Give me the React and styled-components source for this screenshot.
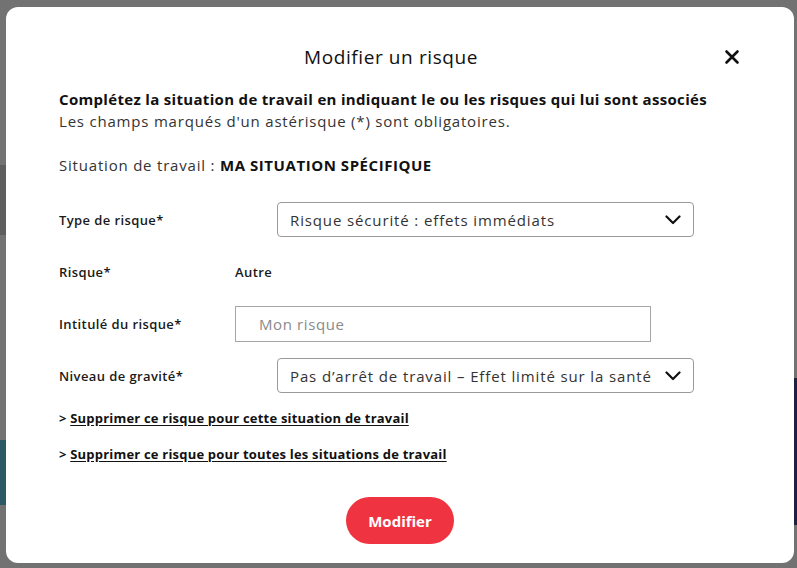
import React from "react";
import styled, { createGlobalStyle } from "styled-components";

const GlobalStyle = createGlobalStyle`
  html, body {
    margin: 0;
    padding: 0;
    height: 100%;
  }
  body {
    font-family: "Open Sans", "Liberation Sans", sans-serif;
    color: #1a1a1a;
    background: #6f6f6f;
  }
`;

const Page = styled.div`
  width: 797px;
  height: 568px;
  overflow: hidden;
  display: grid;
  grid-template-columns: 6px 1fr 4px;
  background: #727272;
`;

const SideStrip = styled.div`
  display: flex;
  flex-direction: column;
`;

const Band = styled.div`
  height: ${(p) => p.h}px;
  background: ${(p) => p.c || "transparent"};
`;

const Overlay = styled.div`
  position: fixed;
  inset: 0;
  display: flex;
  align-items: flex-start;
  padding: 7px 3px 0 6px;
`;

const Modal = styled.div`
  width: 788px;
  height: 556px;
  box-sizing: border-box;
  background: #fff;
  border-radius: 12px;
  padding: 0 53px;
  display: flex;
  flex-direction: column;
`;

const Header = styled.div`
  display: grid;
  grid-template-columns: 1fr auto 1fr;
  align-items: center;
  height: 50px;
  margin-top: 25px;
`;

const Title = styled.h2`
  grid-column: 2;
  margin: 0;
  padding-right: 18px;
  font-size: 19px;
  font-weight: 500;
  letter-spacing: 0.6px;
  color: #111;
`;

const Close = styled.button`
  justify-self: end;
  margin-right: 1px;
  border: 0;
  background: none;
  padding: 0;
  width: 16px;
  height: 16px;
  display: flex;
  cursor: pointer;
`;

const Intro = styled.p`
  margin: 6px 0 0;
  font-size: 15px;
  line-height: 22px;
  letter-spacing: 0.8px;
  color: #333;
`;

const Strong = styled.strong`
  font-weight: 700;
  letter-spacing: ${(p) => p.ls || "0.32px"};
  color: #111;
`;

const Situation = styled.p`
  margin: 22px 0 0;
  font-size: 15px;
  line-height: 23px;
  letter-spacing: 0.8px;
  color: #333;
`;

const Form = styled.div`
  margin-top: 25px;
  display: flex;
  flex-direction: column;
  gap: 17px;
`;

const Row = styled.div`
  display: grid;
  grid-template-columns: 176px 1fr;
  align-items: center;
  height: 35px;
`;

const Label = styled.span`
  font-size: 13px;
  font-weight: 600;
  letter-spacing: 0.4px;
  color: #1a1a1a;
`;

const Value = styled(Label)``;

const Select = styled.div`
  margin-left: 42px;
  width: 417px;
  height: 35px;
  box-sizing: border-box;
  border: 1px solid #9a9a9a;
  border-radius: 4px;
  display: flex;
  align-items: center;
  justify-content: space-between;
  padding: 0 12px 0 12px;
  font-size: 15px;
  letter-spacing: 0.87px;
  color: #333;
  white-space: nowrap;
`;

const Input = styled.input`
  width: 416px;
  height: 36px;
  box-sizing: border-box;
  border: 1px solid #a6a6a6;
  border-radius: 0;
  padding: 0 23px;
  font-family: inherit;
  font-size: 15px;
  letter-spacing: 0.6px;
  color: #333;
  outline: none;
  &::placeholder {
    color: #8a8a8a;
  }
`;

const Links = styled.div`
  margin-top: 16px;
  display: flex;
  flex-direction: column;
  gap: 18px;
`;

const LinkLine = styled.div`
  font-size: 13px;
  font-weight: 700;
  letter-spacing: 0.2px;
  color: #111;
`;

const Link = styled.a`
  color: #111;
  text-decoration: underline;
  text-underline-offset: 2px;
`;

const Footer = styled.div`
  display: flex;
  justify-content: center;
  margin-top: 34px;
`;

const Button = styled.button`
  height: 47px;
  padding: 0 22px;
  border: 0;
  border-radius: 24px;
  background: #ef3340;
  color: #fff;
  font-family: inherit;
  font-size: 15px;
  font-weight: 700;
  cursor: pointer;
`;

const Chevron = () => (
  <svg width="16" height="10" viewBox="0 0 16 10" fill="none">
    <path d="M1.5 1.5L8 8l6.5-6.5" stroke="#111" strokeWidth="2.2" strokeLinecap="round" strokeLinejoin="round" />
  </svg>
);

const CloseIcon = () => (
  <svg width="16" height="16" viewBox="0 0 16 16">
    <path d="M2.5 2.5l11 11M13.5 2.5l-11 11" stroke="#111" strokeWidth="2.6" strokeLinecap="round" />
  </svg>
);

export default function App() {
  return (
    <>
      <GlobalStyle />
      <Page>
        <SideStrip>
          <Band h={165} />
          <Band h={70} c="#5e5e5e" />
          <Band h={205} />
          <Band h={65} c="#2b5966" />
        </SideStrip>
        <div />
        <SideStrip>
          <Band h={378} />
          <Band h={147} c="#1f2142" />
        </SideStrip>
      </Page>
      <Overlay>
        <Modal>
          <Header>
            <Title>Modifier un risque</Title>
            <Close aria-label="Fermer">
              <CloseIcon />
            </Close>
          </Header>
          <Intro>
            <Strong>Complétez la situation de travail en indiquant le ou les risques qui lui sont associés</Strong>
            <br />
            Les champs marqués d'un astérisque (*) sont obligatoires.
          </Intro>
          <Situation>
            Situation de travail : <Strong ls="0.55px">MA SITUATION SPÉCIFIQUE</Strong>
          </Situation>
          <Form>
            <Row>
              <Label>Type de risque*</Label>
              <Select>
                <span>Risque sécurité : effets immédiats</span>
                <Chevron />
              </Select>
            </Row>
            <Row>
              <Label>Risque*</Label>
              <Value>Autre</Value>
            </Row>
            <Row>
              <Label>Intitulé du risque*</Label>
              <Input placeholder="Mon risque" />
            </Row>
            <Row>
              <Label>Niveau de gravité*</Label>
              <Select>
                <span>Pas d’arrêt de travail – Effet limité sur la santé</span>
                <Chevron />
              </Select>
            </Row>
          </Form>
          <Links>
            <LinkLine>
              &gt; <Link>Supprimer ce risque pour cette situation de travail</Link>
            </LinkLine>
            <LinkLine>
              &gt; <Link>Supprimer ce risque pour toutes les situations de travail</Link>
            </LinkLine>
          </Links>
          <Footer>
            <Button>Modifier</Button>
          </Footer>
        </Modal>
      </Overlay>
    </>
  );
}
